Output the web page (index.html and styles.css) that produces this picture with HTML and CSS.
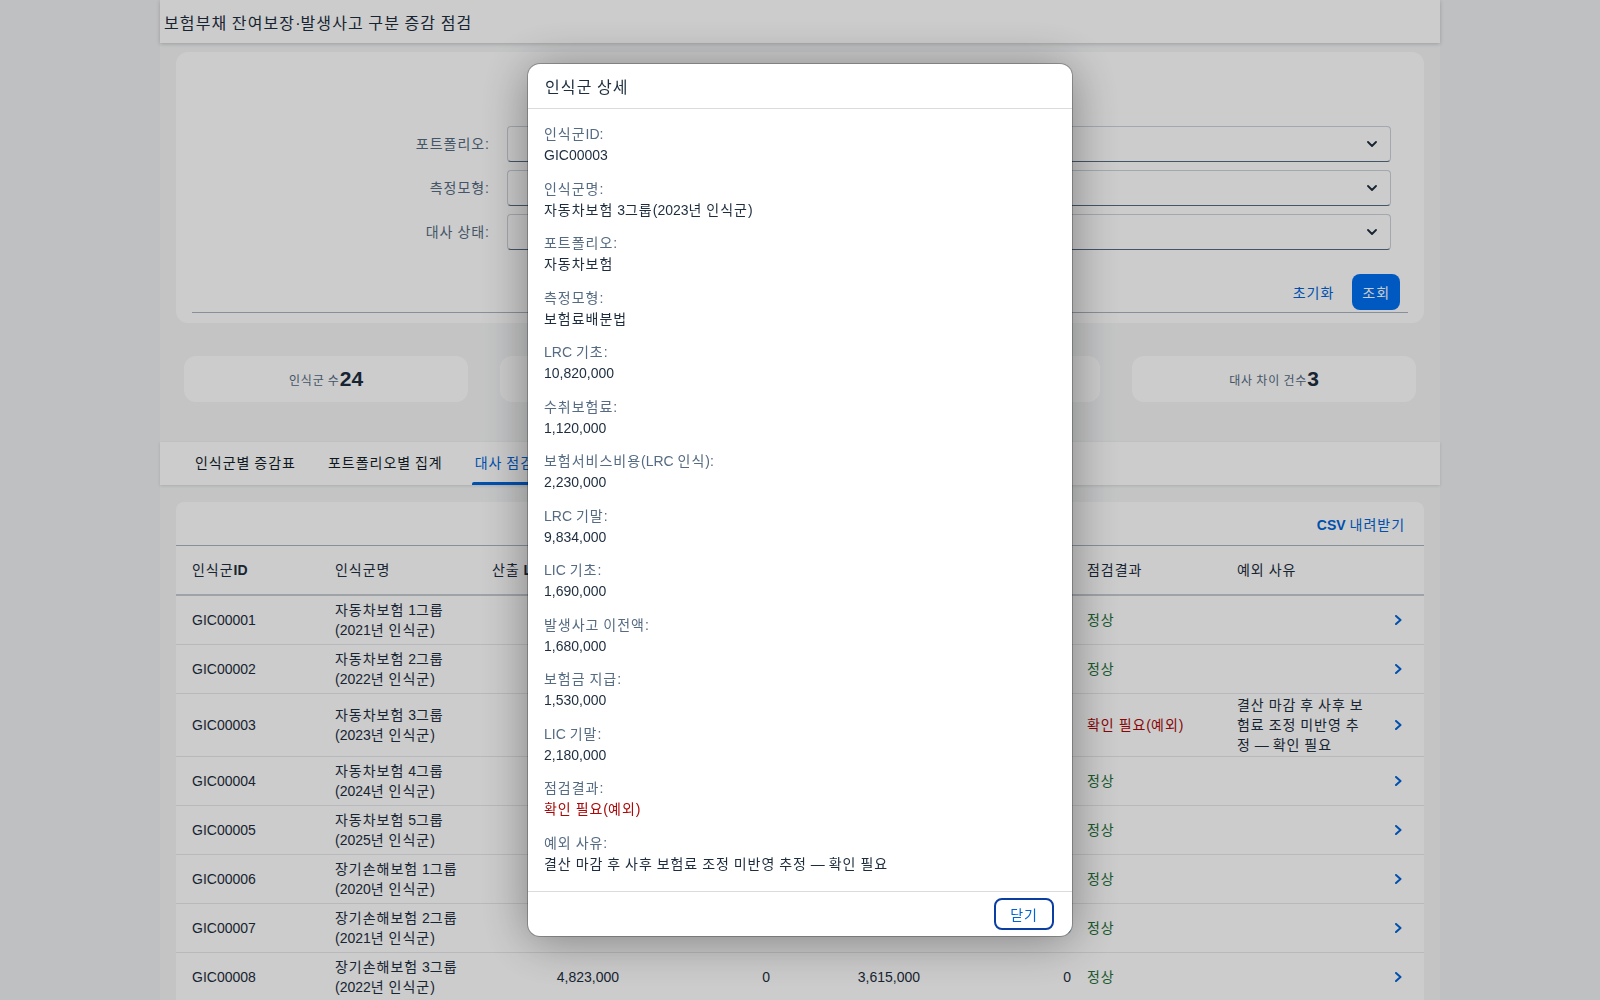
FILE: index.html
```html
<!DOCTYPE html>
<html>
	<head>
		<meta charset="UTF-8">
		<title>보험부채 잔여보장·발생사고 구분 증감 점검</title>
		<link rel="stylesheet" href="styles.css">
	</head>
	<body>
		<div class="shell">
			<div class="page-header"><span>보험부채 잔여보장·발생사고 구분 증감 점검</span></div>
			<div class="content">
				<div class="filter">
					<div class="form">
						<label>포트폴리오:</label>
						<div class="select"><svg width="10" height="6" viewBox="0 0 10 6"><polyline points="1,1 5,5 9,1" /></svg></div>
						<label>측정모형:</label>
						<div class="select"><svg width="10" height="6" viewBox="0 0 10 6"><polyline points="1,1 5,5 9,1" /></svg></div>
						<label>대사 상태:</label>
						<div class="select"><svg width="10" height="6" viewBox="0 0 10 6"><polyline points="1,1 5,5 9,1" /></svg></div>
					</div>
					<div class="toolbar">
						<button class="btn-ghost">초기화</button>
						<button class="btn-primary">조회</button>
					</div>
				</div>

				<div class="stats">
					<div class="stat"><span class="stat-label">인식군 수</span><span class="stat-value">24</span></div>
					<div class="stat"><span class="stat-label">LRC 기말 합계</span><span class="stat-value">182,406,000</span></div>
					<div class="stat"><span class="stat-label">LIC 기말 합계</span><span class="stat-value">61,930,000</span></div>
					<div class="stat"><span class="stat-label">대사 차이 건수</span><span class="stat-value">3</span></div>
				</div>

				<div class="tabs">
					<div class="tab">인식군별 증감표</div>
					<div class="tab">포트폴리오별 집계</div>
					<div class="tab active">대사 점검</div>
				</div>

				<div class="table-panel">
					<div class="table-toolbar"><span class="link">CSV 내려받기</span></div>
					<table>
						<colgroup>
							<col style="width:151px">
							<col style="width:157px">
							<col style="width:143px">
							<col style="width:151px">
							<col style="width:150px">
							<col style="width:151px">
							<col style="width:150px">
							<col style="width:149px">
							<col style="width:46px">
						</colgroup>
						<thead>
							<tr>
								<th>인식군ID</th>
								<th>인식군명</th>
								<th>산출 LRC 기말</th>
								<th>LRC 차이</th>
								<th>산출 LIC 기말</th>
								<th>LIC 차이</th>
								<th>점검결과</th>
								<th>예외 사유</th>
								<th></th>
							</tr>
						</thead>
						<tbody>
							<tr>
								<td>GIC00001</td><td>자동차보험 1그룹(2021년 인식군)</td>
								<td class="num">5,412,000</td><td class="num">0</td><td class="num">2,104,000</td><td class="num">0</td>
								<td class="ok">정상</td><td></td>
								<td class="nav"><svg width="7" height="10" viewBox="0 0 7 10"><polyline points="1,1 5.5,5 1,9" /></svg></td>
							</tr>
							<tr>
								<td>GIC00002</td><td>자동차보험 2그룹(2022년 인식군)</td>
								<td class="num">7,268,000</td><td class="num">0</td><td class="num">2,451,000</td><td class="num">0</td>
								<td class="ok">정상</td><td></td>
								<td class="nav"><svg width="7" height="10" viewBox="0 0 7 10"><polyline points="1,1 5.5,5 1,9" /></svg></td>
							</tr>
							<tr>
								<td>GIC00003</td><td>자동차보험 3그룹(2023년 인식군)</td>
								<td class="num">9,834,000</td><td class="num">12,000</td><td class="num">2,180,000</td><td class="num">0</td>
								<td class="error">확인 필요(예외)</td><td>결산 마감 후 사후 보험료 조정 미반영 추정 — 확인 필요</td>
								<td class="nav"><svg width="7" height="10" viewBox="0 0 7 10"><polyline points="1,1 5.5,5 1,9" /></svg></td>
							</tr>
							<tr>
								<td>GIC00004</td><td>자동차보험 4그룹(2024년 인식군)</td>
								<td class="num">11,205,000</td><td class="num">0</td><td class="num">1,874,000</td><td class="num">0</td>
								<td class="ok">정상</td><td></td>
								<td class="nav"><svg width="7" height="10" viewBox="0 0 7 10"><polyline points="1,1 5.5,5 1,9" /></svg></td>
							</tr>
							<tr>
								<td>GIC00005</td><td>자동차보험 5그룹(2025년 인식군)</td>
								<td class="num">12,940,000</td><td class="num">0</td><td class="num">963,000</td><td class="num">0</td>
								<td class="ok">정상</td><td></td>
								<td class="nav"><svg width="7" height="10" viewBox="0 0 7 10"><polyline points="1,1 5.5,5 1,9" /></svg></td>
							</tr>
							<tr>
								<td>GIC00006</td><td>장기손해보험 1그룹(2020년 인식군)</td>
								<td class="num">3,786,000</td><td class="num">0</td><td class="num">4,102,000</td><td class="num">0</td>
								<td class="ok">정상</td><td></td>
								<td class="nav"><svg width="7" height="10" viewBox="0 0 7 10"><polyline points="1,1 5.5,5 1,9" /></svg></td>
							</tr>
							<tr>
								<td>GIC00007</td><td>장기손해보험 2그룹(2021년 인식군)</td>
								<td class="num">4,315,000</td><td class="num">0</td><td class="num">3,908,000</td><td class="num">0</td>
								<td class="ok">정상</td><td></td>
								<td class="nav"><svg width="7" height="10" viewBox="0 0 7 10"><polyline points="1,1 5.5,5 1,9" /></svg></td>
							</tr>
							<tr>
								<td>GIC00008</td><td>장기손해보험 3그룹(2022년 인식군)</td>
								<td class="num">4,823,000</td><td class="num">0</td><td class="num">3,615,000</td><td class="num">0</td>
								<td class="ok">정상</td><td></td>
								<td class="nav"><svg width="7" height="10" viewBox="0 0 7 10"><polyline points="1,1 5.5,5 1,9" /></svg></td>
							</tr>
							<tr>
								<td>GIC00009</td><td>장기손해보험 4그룹(2023년 인식군)</td>
								<td class="num">5,290,000</td><td class="num">0</td><td class="num">3,021,000</td><td class="num">0</td>
								<td class="ok">정상</td><td></td>
								<td class="nav"><svg width="7" height="10" viewBox="0 0 7 10"><polyline points="1,1 5.5,5 1,9" /></svg></td>
							</tr>
						</tbody>
					</table>
				</div>
			</div>
		</div>

		<div class="overlay">
			<div class="dialog">
				<div class="dialog-header"><span>인식군 상세</span></div>
				<div class="dialog-body">
					<div class="field"><div class="field-label">인식군ID:</div><div class="field-value">GIC00003</div></div>
					<div class="field"><div class="field-label">인식군명:</div><div class="field-value">자동차보험 3그룹(2023년 인식군)</div></div>
					<div class="field"><div class="field-label">포트폴리오:</div><div class="field-value">자동차보험</div></div>
					<div class="field"><div class="field-label">측정모형:</div><div class="field-value">보험료배분법</div></div>
					<div class="field"><div class="field-label">LRC 기초:</div><div class="field-value">10,820,000</div></div>
					<div class="field"><div class="field-label">수취보험료:</div><div class="field-value">1,120,000</div></div>
					<div class="field"><div class="field-label">보험서비스비용(LRC 인식):</div><div class="field-value">2,230,000</div></div>
					<div class="field"><div class="field-label">LRC 기말:</div><div class="field-value">9,834,000</div></div>
					<div class="field"><div class="field-label">LIC 기초:</div><div class="field-value">1,690,000</div></div>
					<div class="field"><div class="field-label">발생사고 이전액:</div><div class="field-value">1,680,000</div></div>
					<div class="field"><div class="field-label">보험금 지급:</div><div class="field-value">1,530,000</div></div>
					<div class="field"><div class="field-label">LIC 기말:</div><div class="field-value">2,180,000</div></div>
					<div class="field"><div class="field-label">점검결과:</div><div class="field-value error">확인 필요(예외)</div></div>
					<div class="field"><div class="field-label">예외 사유:</div><div class="field-value">결산 마감 후 사후 보험료 조정 미반영 추정 — 확인 필요</div></div>
				</div>
				<div class="dialog-footer">
					<button class="btn-close">닫기</button>
				</div>
			</div>
		</div>
		<script src="hangul.js"></script>
	</body>
</html>
```

FILE: styles.css
```css
html, body {
	margin: 0;
	overflow: hidden;
}
body {
	background: #eff0f2;
	color: #1d2d3e;
	font-family: "Liberation Sans", "Noto Sans CJK KR", sans-serif;
	font-size: 14px;
}
button {
	font: inherit;
	cursor: pointer;
}
/* hangul runs: full-width advance, never bold */
.hg {
	letter-spacing: 0.07em;
	font-weight: normal;
}
.shell {
	width: 1280px;
	margin: 0 auto;
	min-height: 1100px;
	background: #f5f6f7;
}
.page-header {
	position: relative;
	z-index: 1;
	height: 43px;
	display: flex;
	align-items: center;
	padding-left: 4px;
	background: #fff;
	box-shadow: 0 1px 4px rgba(0, 0, 0, 0.2);
	font-size: 16px;
}
.content {
	padding: 9px 16px 0;
}

/* filter bar */
.filter {
	background: #fff;
	border-radius: 12px;
	padding: 74px 16px 10px;
}
.form {
	display: grid;
	grid-template-columns: 297px 1fr;
	column-gap: 18px;
	row-gap: 8px;
	padding-right: 17px;
}
.form label {
	text-align: right;
	line-height: 36px;
	color: #556b82;
}
.select {
	height: 36px;
	box-sizing: border-box;
	display: flex;
	align-items: center;
	justify-content: flex-end;
	padding-right: 13px;
	background: #fff;
	border: 1px solid #ccd3da;
	border-bottom-color: #556b81;
	border-radius: 4px;
}
.select polyline {
	fill: none;
	stroke: #1d2d3e;
	stroke-width: 1.8;
	stroke-linecap: round;
	stroke-linejoin: round;
}
.toolbar {
	display: flex;
	justify-content: flex-end;
	gap: 8px;
	margin-top: 20px;
	padding: 4px 8px 2px 0;
	border-bottom: 1px solid #a9b4be;
}
.btn-ghost {
	height: 36px;
	padding: 0 10px;
	border: 0;
	background: none;
	color: #0064d9;
}
.btn-primary {
	height: 36px;
	padding: 0 10px;
	border: 0;
	border-radius: 8px;
	background: #0070f2;
	color: #fff;
}

/* kpi cards */
.stats {
	display: grid;
	grid-template-columns: repeat(4, 1fr);
	gap: 32px;
	margin-top: 33px;
	padding: 0 8px;
}
.stat {
	height: 46px;
	display: flex;
	align-items: center;
	justify-content: center;
	background: #fff;
	border-radius: 12px;
}
.stat-label {
	font-size: 12px;
	color: #556b82;
}
.stat-value {
	font-size: 21px;
	font-weight: bold;
	color: #1d2d3e;
}

/* tabs */
.tabs {
	display: flex;
	height: 43px;
	margin: 40px -16px 0;
	padding-left: 19px;
	background: #fff;
	box-shadow: 0 1px 3px rgba(0, 0, 0, 0.12);
}
.tab {
	position: relative;
	padding: 0 16px;
	line-height: 43px;
	color: #131e29;
}
.tab.active {
	color: #0064d9;
}
.tab.active::after {
	content: "";
	position: absolute;
	left: 13px;
	right: 13px;
	bottom: 0;
	height: 3px;
	border-radius: 2px 2px 0 0;
	background: #0064d9;
}

/* table */
.table-panel {
	margin-top: 17px;
	background: #fff;
	border-radius: 8px 8px 0 0;
}
.table-toolbar {
	height: 43px;
	display: flex;
	align-items: center;
	justify-content: flex-end;
	padding-right: 19px;
	border-bottom: 1px solid #a9b4be;
}
.link {
	color: #0064d9;
	font-weight: bold;
}
table {
	width: 1248px;
	table-layout: fixed;
	border-collapse: collapse;
}
th, td {
	box-sizing: border-box;
	padding: 1px 8px;
	line-height: 20px;
	vertical-align: middle;
	text-align: left;
}
th {
	height: 49px;
	font-weight: bold;
	border-bottom: 2px solid #c6ccd2;
}
td {
	height: 49px;
	border-bottom: 1px solid #e5e8eb;
}
th:first-child, td:first-child {
	padding-left: 16px;
}
td.num {
	text-align: right;
}
.ok {
	color: #256f3a;
}
.error {
	color: #aa0808;
}
td.nav {
	padding-left: 17px;
}
td.nav svg {
	display: block;
}
td.nav polyline {
	fill: none;
	stroke: #0064d9;
	stroke-width: 2;
	stroke-linecap: round;
	stroke-linejoin: round;
}

/* dialog */
.overlay {
	position: fixed;
	inset: 0;
	z-index: 10;
	display: flex;
	align-items: center;
	justify-content: center;
	background: rgba(0, 0, 0, 0.2);
}
.dialog {
	width: 544px;
	background: #fff;
	border-radius: 12px;
	overflow: hidden;
	box-shadow: 0 0 0 1px rgba(0, 0, 0, 0.25), 0 4px 48px rgba(0, 0, 0, 0.38);
}
.dialog-header {
	height: 44px;
	display: flex;
	align-items: center;
	padding: 0 17px;
	font-size: 16px;
	border-bottom: 1px solid #d9dcdf;
}
.dialog-body {
	padding: 15px 16px 17px;
}
.field + .field {
	margin-top: 13.5px;
}
.field-label {
	line-height: 20px;
	margin-bottom: 1px;
	color: #556b82;
}
.field-value {
	line-height: 20px;
}
.dialog-footer {
	height: 44px;
	display: flex;
	align-items: center;
	justify-content: flex-end;
	padding-right: 18px;
	border-top: 1px solid #d9dcdf;
}
.btn-close {
	width: 60px;
	height: 32px;
	border: 2px solid #0a3ea0;
	border-radius: 8px;
	background: #fff;
	color: #0064d9;
}
```

FILE: hangul.js
```js
// wrap runs of hangul in a span so they can be spaced/weighted on their own
var hangulRun = /[\u1100-\u11ff\u3130-\u318f\uac00-\ud7af]+/g;

var walker = document.createTreeWalker(document.body, NodeFilter.SHOW_TEXT);
var nodes = [];
while (walker.nextNode()) {
	if (hangulRun.test(walker.currentNode.nodeValue)) nodes.push(walker.currentNode);
	hangulRun.lastIndex = 0;
}

nodes.forEach(function (node) {
	var text = node.nodeValue;
	var frag = document.createDocumentFragment();
	var last = 0;
	text.replace(hangulRun, function (run, at) {
		if (at > last) frag.appendChild(document.createTextNode(text.slice(last, at)));
		var span = document.createElement("span");
		span.className = "hg";
		span.textContent = run;
		frag.appendChild(span);
		last = at + run.length;
	});
	if (last < text.length) frag.appendChild(document.createTextNode(text.slice(last)));
	node.parentNode.replaceChild(frag, node);
});
```
